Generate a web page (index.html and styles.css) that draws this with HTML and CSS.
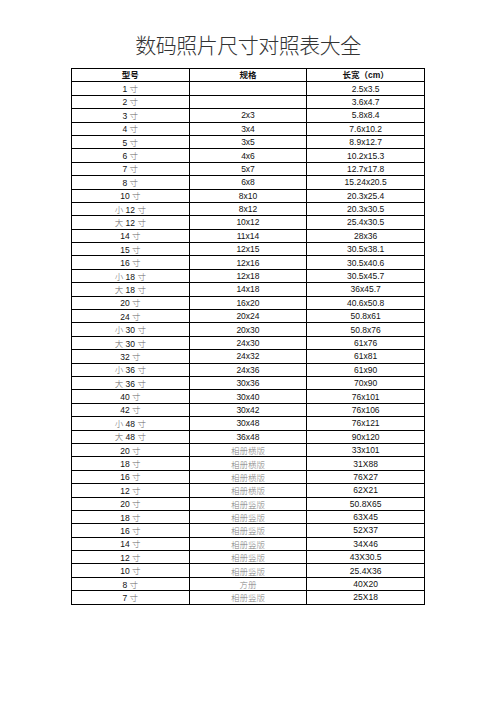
FILE: index.html
```html
<!DOCTYPE html>
<html lang="zh">
<head>
<meta charset="utf-8">
<title>数码照片尺寸对照表大全</title>
<link rel="stylesheet" href="styles.css">
</head>
<body>
<h1 class="title">数码照片尺寸对照表大全</h1>
<table class="sizes">
<thead>
<tr><th>型号</th><th>规格</th><th>长宽（cm）</th></tr>
</thead>
<tbody>
<tr><td>1 <span class="cj">寸</span></td><td></td><td>2.5x3.5</td></tr>
<tr><td>2 <span class="cj">寸</span></td><td></td><td>3.6x4.7</td></tr>
<tr><td>3 <span class="cj">寸</span></td><td>2x3</td><td>5.8x8.4</td></tr>
<tr><td>4 <span class="cj">寸</span></td><td>3x4</td><td>7.6x10.2</td></tr>
<tr><td>5 <span class="cj">寸</span></td><td>3x5</td><td>8.9x12.7</td></tr>
<tr><td>6 <span class="cj">寸</span></td><td>4x6</td><td>10.2x15.3</td></tr>
<tr><td>7 <span class="cj">寸</span></td><td>5x7</td><td>12.7x17.8</td></tr>
<tr><td>8 <span class="cj">寸</span></td><td>6x8</td><td>15.24x20.5</td></tr>
<tr><td>10 <span class="cj">寸</span></td><td>8x10</td><td>20.3x25.4</td></tr>
<tr><td><span class="cj">小</span> 12 <span class="cj">寸</span></td><td>8x12</td><td>20.3x30.5</td></tr>
<tr><td><span class="cj">大</span> 12 <span class="cj">寸</span></td><td>10x12</td><td>25.4x30.5</td></tr>
<tr><td>14 <span class="cj">寸</span></td><td>11x14</td><td>28x36</td></tr>
<tr><td>15 <span class="cj">寸</span></td><td>12x15</td><td>30.5x38.1</td></tr>
<tr><td>16 <span class="cj">寸</span></td><td>12x16</td><td>30.5x40.6</td></tr>
<tr><td><span class="cj">小</span> 18 <span class="cj">寸</span></td><td>12x18</td><td>30.5x45.7</td></tr>
<tr><td><span class="cj">大</span> 18 <span class="cj">寸</span></td><td>14x18</td><td>36x45.7</td></tr>
<tr><td>20 <span class="cj">寸</span></td><td>16x20</td><td>40.6x50.8</td></tr>
<tr><td>24 <span class="cj">寸</span></td><td>20x24</td><td>50.8x61</td></tr>
<tr><td><span class="cj">小</span> 30 <span class="cj">寸</span></td><td>20x30</td><td>50.8x76</td></tr>
<tr><td><span class="cj">大</span> 30 <span class="cj">寸</span></td><td>24x30</td><td>61x76</td></tr>
<tr><td>32 <span class="cj">寸</span></td><td>24x32</td><td>61x81</td></tr>
<tr><td><span class="cj">小</span> 36 <span class="cj">寸</span></td><td>24x36</td><td>61x90</td></tr>
<tr><td><span class="cj">大</span> 36 <span class="cj">寸</span></td><td>30x36</td><td>70x90</td></tr>
<tr><td>40 <span class="cj">寸</span></td><td>30x40</td><td>76x101</td></tr>
<tr><td>42 <span class="cj">寸</span></td><td>30x42</td><td>76x106</td></tr>
<tr><td><span class="cj">小</span> 48 <span class="cj">寸</span></td><td>30x48</td><td>76x121</td></tr>
<tr><td><span class="cj">大</span> 48 <span class="cj">寸</span></td><td>36x48</td><td>90x120</td></tr>
<tr><td>20 <span class="cj">寸</span></td><td class="album">相册横版</td><td>33x101</td></tr>
<tr><td>18 <span class="cj">寸</span></td><td class="album">相册横版</td><td>31X88</td></tr>
<tr><td>16 <span class="cj">寸</span></td><td class="album">相册横版</td><td>76X27</td></tr>
<tr><td>12 <span class="cj">寸</span></td><td class="album">相册横版</td><td>62X21</td></tr>
<tr><td>20 <span class="cj">寸</span></td><td class="album">相册竖版</td><td>50.8X65</td></tr>
<tr><td>18 <span class="cj">寸</span></td><td class="album">相册竖版</td><td>63X45</td></tr>
<tr><td>16 <span class="cj">寸</span></td><td class="album">相册竖版</td><td>52X37</td></tr>
<tr><td>14 <span class="cj">寸</span></td><td class="album">相册竖版</td><td>34X46</td></tr>
<tr><td>12 <span class="cj">寸</span></td><td class="album">相册竖版</td><td>43X30.5</td></tr>
<tr><td>10 <span class="cj">寸</span></td><td class="album">相册竖版</td><td>25.4X36</td></tr>
<tr><td>8 <span class="cj">寸</span></td><td class="album">方册</td><td>40X20</td></tr>
<tr><td>7 <span class="cj">寸</span></td><td class="album">相册竖版</td><td>25X18</td></tr>
</tbody>
</table>
</body>
</html>
```
FILE: styles.css
```css
html, body {
  margin: 0;
  padding: 0;
  background: #ffffff;
}

body {
  font-family: "Liberation Sans", "Noto Sans CJK SC", sans-serif;
  color: #111111;
}

.title {
  margin: 0;
  padding-top: 30px;
  font-family: "Noto Sans CJK SC", sans-serif;
  font-size: 21px;
  line-height: 28px;
  font-weight: 300;
  text-align: center;
  color: #333333;
  letter-spacing: -0.5px;
}

.sizes {
  margin: 10px auto 0;
  width: 354px;
  border-collapse: collapse;
  table-layout: fixed;
  font-size: 8.5px;
}

.sizes th,
.sizes td {
  border: 1px solid #000000;
  padding: 0;
  height: 12.4px;
  line-height: 10px;
  text-align: center;
  vertical-align: middle;
  width: 33.33%;
  white-space: nowrap;
}

.sizes th {
  font-weight: 700;
}

.sizes .cj {
  font-family: "Noto Sans CJK SC", sans-serif;
  font-weight: 300;
  color: #666666;
}

.sizes .album {
  font-family: "Noto Sans CJK SC", sans-serif;
  font-weight: 300;
  color: #808080;
}
```
